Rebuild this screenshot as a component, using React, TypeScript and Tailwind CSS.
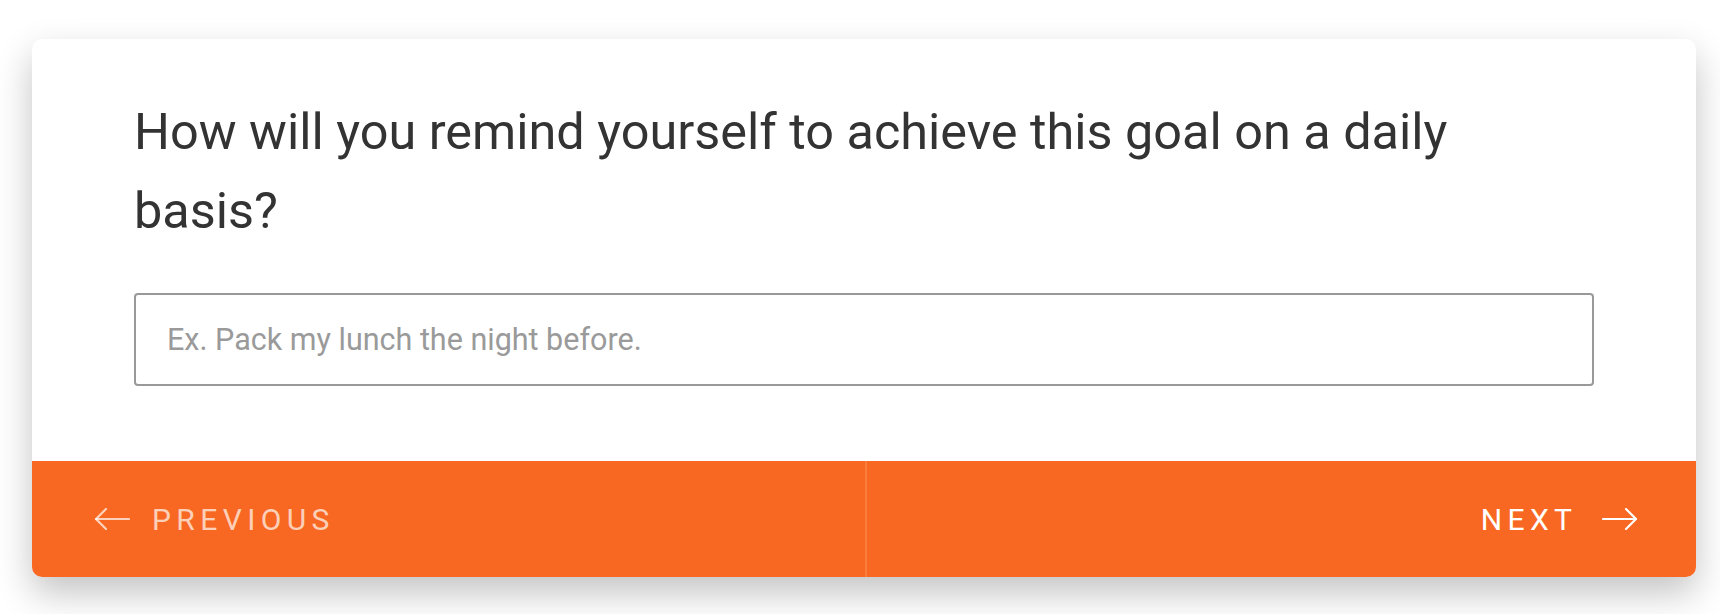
import React from "react";

const ArrowLeft = ({ className }: { className?: string }) => (
  <svg viewBox="0 0 36 22" className={className} fill="none" stroke="currentColor" strokeWidth="2.2" strokeLinecap="round" strokeLinejoin="round">
    <path d="M35 11H2" />
    <path d="M12 1 2 11l10 10" />
  </svg>
);

const ArrowRight = ({ className }: { className?: string }) => (
  <svg viewBox="0 0 36 22" className={className} fill="none" stroke="currentColor" strokeWidth="2.2" strokeLinecap="round" strokeLinejoin="round">
    <path d="M1 11h33" />
    <path d="m24 1 10 10-10 10" />
  </svg>
);

const App = () => {
  return (
    <div className="min-h-screen bg-white pt-[39px] pl-[32px] font-['Roboto',sans-serif]">
      <div className="w-[1664px] bg-white rounded-[10px] shadow-[0_16px_36px_rgba(0,0,0,0.24)] overflow-hidden">
        <div className="px-[102px] pt-[53px] pb-[75px]">
          <h1 className="max-w-[1400px] text-[50.4px] leading-[79px] text-[#333333] font-normal">
            How will you remind yourself to achieve this goal on a daily basis?
          </h1>
          <input
            type="text"
            placeholder="Ex. Pack my lunch the night before."
            className="mt-[43px] w-full h-[93px] border-2 border-[#999999] rounded-[4px] px-[31px] text-[30.5px] text-[#333333] placeholder:text-[#9a9a9a] outline-none"
          />
        </div>
        <div className="flex h-[116px] bg-[#f86822]">
          <button className="flex-1 flex items-center gap-[22px] pl-[62px] text-white/70 border-r-2 border-[#fb7c3c]">
            <ArrowLeft className="w-[36px] h-[22px]" />
            <span className="text-[30px] tracking-[0.18em] uppercase">Previous</span>
          </button>
          <button className="flex-1 flex items-center justify-end gap-[30px] pr-[58px] text-white">
            <span className="text-[30px] tracking-[0.18em] uppercase mr-[-0.18em]">Next</span>
            <ArrowRight className="w-[36px] h-[22px]" />
          </button>
        </div>
      </div>
    </div>
  );
};

export default App;
